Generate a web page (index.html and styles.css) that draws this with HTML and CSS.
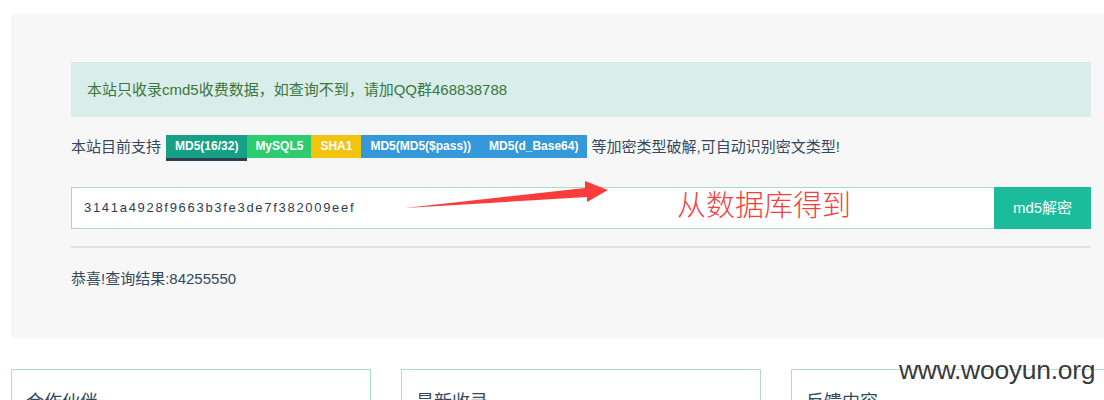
FILE: index.html
```html
<!DOCTYPE html>
<html lang="zh">
<head>
<meta charset="utf-8">
<title>cmd5</title>
<link rel="stylesheet" href="styles.css">
</head>
<body>
<div class="container">
  <div class="jumbotron">
    <div class="alert">本站只收录cmd5收费数据，如查询不到，请加QQ群468838788</div>
    <div class="support">
      <span class="support-text">本站目前支持</span>
      <span class="label l-active">MD5(16/32)</span><span class="label l-green">MySQL5</span><span class="label l-yellow">SHA1</span><span class="label l-blue">MD5(MD5($pass))</span><span class="label l-blue">MD5(d_Base64)</span>
      <span class="support-text">等加密类型破解,可自动识别密文类型!</span>
    </div>
    <div class="search">
      <div class="input">3141a4928f9663b3fe3de7f382009eef</div>
      <div class="btn">md5解密</div>
      <svg class="arrow" width="240" height="40" viewBox="0 0 240 40"><polygon points="0,28 180,8 180,1 203,10 182,22 182,17" fill="#fb3c3c"/></svg>
      <div class="note">从数据库得到</div>
    </div>
    <div class="hr"></div>
    <div class="result">恭喜!查询结果:84255550</div>
  </div>
  <div class="cards">
    <div class="card"><div class="card-title">合作伙伴</div></div>
    <div class="card"><div class="card-title">最新收录</div></div>
    <div class="card"><div class="card-title">反馈内容</div></div>
  </div>
  <div class="watermark">www.wooyun.org</div>
</div>
</body>
</html>
```

FILE: styles.css
```css
html, body {
  margin: 0;
  padding: 0;
  background: #fff;
  overflow: hidden;
}
body {
  font-family: "Liberation Sans", Arial, "Noto Sans CJK SC", sans-serif;
  font-size: 15px;
  color: #34495e;
  width: 1104px;
  height: 400px;
}
.container {
  position: relative;
  width: 1140px;
  margin-left: 11px;
  padding-top: 14px;
}
.jumbotron {
  background: #f7f7f7;
  padding: 48px 60px 0 60px;
  height: 276px;
}
.alert {
  background: #d9edea;
  color: #3c763d;
  height: 55px;
  line-height: 55px;
  padding: 0 16px;
  box-sizing: border-box;
}
.support {
  display: flex;
  align-items: flex-start;
  margin-top: 18px;
  height: 26px;
}
.support-text {
  line-height: 24px;
}
.support-text:first-child {
  margin-right: 5px;
}
.support-text:last-child {
  margin-left: 4px;
}
.label {
  display: block;
  height: 23px;
  line-height: 23px;
  padding: 0 9px;
  font-size: 12px;
  font-weight: bold;
  color: #fff;
}
.l-active {
  background: #16a085;
  border-bottom: 3px solid #2c3e50;
}
.l-green { background: #2ecc71; padding: 0 8px; }
.l-yellow { background: #f1c40f; }
.l-blue { background: #3498db; }
.search {
  position: relative;
  display: flex;
  margin-top: 26px;
  height: 42px;
}
.input {
  flex: 1;
  background: #fff;
  border: 1px solid #a9d8cd;
  border-right: none;
  box-sizing: border-box;
  padding-left: 12px;
  line-height: 40px;
  font-size: 13px;
  letter-spacing: 1.7px;
  color: #2c3e50;
}
.btn {
  width: 97px;
  background: #1abc9c;
  color: #fff;
  text-align: center;
  line-height: 42px;
  font-size: 15px;
}
.arrow {
  position: absolute;
  left: 334px;
  top: -7px;
}
.note {
  position: absolute;
  left: 606px;
  top: -2px;
  font-size: 29px;
  line-height: 36px;
  color: #f5403f;
  font-family: "Noto Sans CJK SC", sans-serif;
  font-weight: 300;
}
.hr {
  height: 2px;
  background: #e2e2e2;
  margin-top: 17px;
}
.result {
  margin-top: 21px;
  line-height: 20px;
}
.cards {
  display: flex;
  gap: 30px;
  margin-top: 31px;
}
.card {
  width: 360px;
  height: 60px;
  border: 1px solid #b0ddd2;
  box-sizing: border-box;
  padding: 20px 14px;
}
.card-title {
  font-size: 18px;
  line-height: 24px;
  color: #34495e;
}
.watermark {
  position: absolute;
  left: 888px;
  top: 353px;
  font-size: 26.5px;
  line-height: 34px;
  color: #3a3a3a;
  letter-spacing: -0.3px;
  text-shadow: 0 0 2px #fff, 0 0 2px #fff;
}
```
